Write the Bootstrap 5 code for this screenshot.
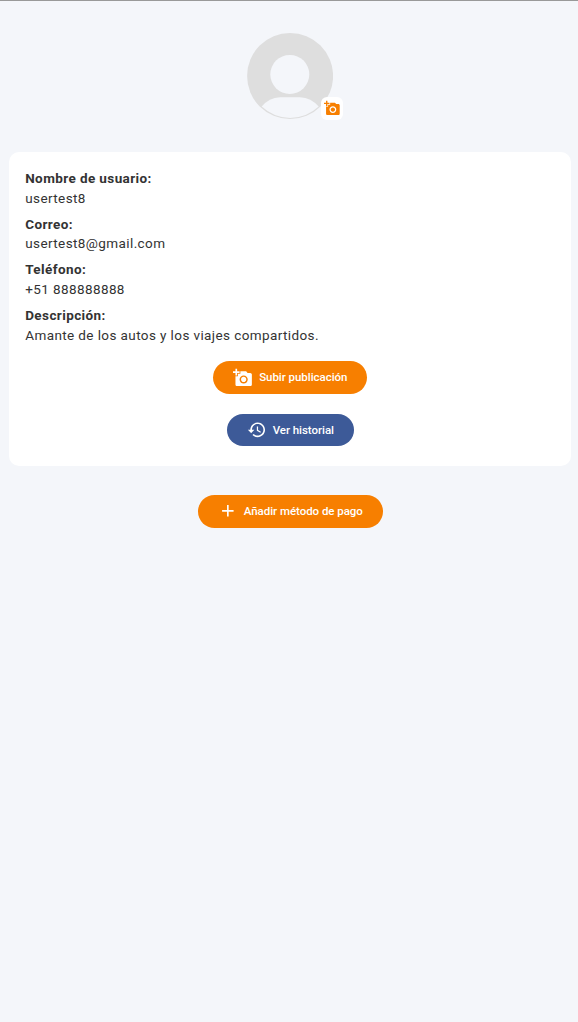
<!DOCTYPE html>
<html lang="es">
<head>
<meta charset="utf-8">
<meta name="viewport" content="width=device-width, initial-scale=1">
<title>Perfil</title>
<link href="https://cdn.jsdelivr.net/npm/bootstrap@5.3.0/dist/css/bootstrap.min.css" rel="stylesheet">
<style>
body{background:#f4f6fa;color:#333;font-family:Roboto,sans-serif;font-size:13.5px;line-height:19.7px;letter-spacing:.4px;border-top:1px solid #999;min-height:100vh}
.avatar{width:86px;height:86px;margin-top:32px;margin-left:1px}
.edit-photo{right:-10.5px;bottom:-1px;width:22.5px;height:23px;border-radius:6px;color:#f77f00;background:#fff;border:0}
.profile{margin:33.4px 7px 0 9px;height:313.2px;border-radius:10px;padding:16.7px 15.7px 0 16.2px}
.field{padding-bottom:6.3px}
.field dt,.field dd{margin:0;line-height:19.7px}
.pill{--bs-btn-color:#fff;--bs-btn-hover-color:#fff;height:32.8px;padding:0 20px;border:0;font-size:11.5px;font-weight:500;line-height:16px;letter-spacing:-.04px;gap:6.4px}
.pill svg{width:19.7px;height:19.7px;flex:none}
.pill-orange{--bs-btn-bg:#f77f00;--bs-btn-hover-bg:#e67600}
.pill-blue{--bs-btn-bg:#3d5a98;--bs-btn-hover-bg:#344e85}
.actions{gap:19.7px;padding-top:9.2px}
.payment{margin:29.2px 0 0 2.5px}
</style>
</head>
<body>
<main class="d-flex flex-column align-items-stretch">
  <div class="avatar position-relative align-self-center">
    <svg class="d-block" width="86" height="86" viewBox="0 0 86 86" aria-hidden="true">
      <circle cx="43.1" cy="43" r="43" fill="#dedede"/>
      <circle cx="42.8" cy="41.4" r="19.5" fill="#f4f6fa"/>
      <path fill="#f4f6fa" d="M14.7 73.6Q22 64.5 33 64.2H53Q64 64.5 71.7 73.6A41.5 41.5 0 0 1 14.7 73.6Z"/>
    </svg>
    <button class="edit-photo position-absolute d-flex align-items-center justify-content-center p-0" aria-label="Cambiar foto">
      <svg width="16.4" height="16.4" viewBox="0 0 24 24" fill="currentColor"><path d="M3 4V1h2v3h3v2H5v3H3V6H0V4h3zm3 6V7h3V4h7l1.83 2H21c1.1 0 2 .9 2 2v12c0 1.1-.9 2-2 2H5c-1.1 0-2-.9-2-2V10h3zm7 9c2.76 0 5-2.24 5-5s-2.24-5-5-5-5 2.24-5 5 2.24 5 5 5zm-3.2-5c0 1.77 1.43 3.2 3.2 3.2s3.2-1.43 3.2-3.2-1.43-3.2-3.2-3.2-3.2 1.43-3.2 3.2z"/></svg>
    </button>
  </div>
  <section class="profile bg-white">
    <dl class="m-0">
      <div class="field"><dt>Nombre de usuario:</dt><dd>usertest8</dd></div>
      <div class="field"><dt>Correo:</dt><dd>usertest8@gmail.com</dd></div>
      <div class="field"><dt>Teléfono:</dt><dd>+51 888888888</dd></div>
      <div class="field"><dt>Descripción:</dt><dd>Amante de los autos y los viajes compartidos.</dd></div>
    </dl>
    <div class="actions d-flex flex-column align-items-center">
      <button class="btn pill pill-orange rounded-pill d-flex align-items-center">
        <svg viewBox="0 0 24 24" fill="currentColor"><path d="M3 4V1h2v3h3v2H5v3H3V6H0V4h3zm3 6V7h3V4h7l1.83 2H21c1.1 0 2 .9 2 2v12c0 1.1-.9 2-2 2H5c-1.1 0-2-.9-2-2V10h3zm7 9c2.76 0 5-2.24 5-5s-2.24-5-5-5-5 2.24-5 5 2.24 5 5 5zm-3.2-5c0 1.77 1.43 3.2 3.2 3.2s3.2-1.43 3.2-3.2-1.43-3.2-3.2-3.2-3.2 1.43-3.2 3.2z"/></svg>
        <span>Subir publicación</span>
      </button>
      <button class="btn pill pill-blue rounded-pill d-flex align-items-center">
        <svg viewBox="0 0 24 24" fill="currentColor"><path d="M13 3c-4.97 0-9 4.03-9 9H1l3.89 3.89.07.14L9 12H6c0-3.87 3.13-7 7-7s7 3.13 7 7-3.13 7-7 7c-1.93 0-3.68-.79-4.94-2.06l-1.42 1.42C8.27 19.99 10.51 21 13 21c4.97 0 9-4.03 9-9s-4.03-9-9-9zm-1 5v5l4.28 2.54.72-1.21-3.5-2.08V8H12z"/></svg>
        <span>Ver historial</span>
      </button>
    </div>
  </section>
  <div class="payment d-flex justify-content-center">
    <button class="btn pill pill-orange rounded-pill d-flex align-items-center">
      <svg viewBox="0 0 24 24" fill="currentColor"><path d="M19 13h-6v6h-2v-6H5v-2h6V5h2v6h6v2z"/></svg>
      <span>Añadir método de pago</span>
    </button>
  </div>
</main>
<script src="https://cdn.jsdelivr.net/npm/bootstrap@5.3.0/dist/js/bootstrap.bundle.min.js"></script>
</body>
</html>
